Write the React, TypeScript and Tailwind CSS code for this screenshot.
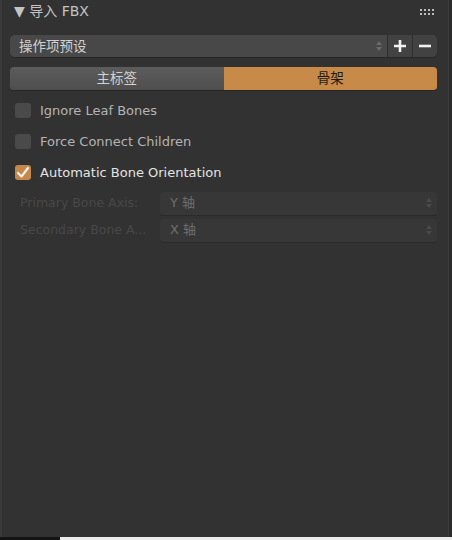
import React from "react";

const font = { fontFamily: '"DejaVu Sans", "Noto Sans CJK SC", sans-serif' };

function Arrows({ color = "#6a6a6a" }: { color?: string }) {
  return (
    <svg width="8" height="14" viewBox="0 0 8 14">
      <path d="M1 6 L4 2 L7 6 Z" fill={color} />
      <path d="M1 8 L4 12 L7 8 Z" fill={color} />
    </svg>
  );
}

function Check({ checked, label, bright }: { checked?: boolean; label: string; bright?: boolean }) {
  return (
    <div className="flex items-center h-[31px] pl-[13px]">
      {checked ? (
        <div className="w-[16px] h-[15px] rounded-[3px] bg-[#c4884a] flex items-center justify-center">
          <svg width="14" height="13" viewBox="0 0 14 13">
            <path d="M2 7 L5.5 10.5 L12 2" stroke="#f4f0ea" strokeWidth="2.2" fill="none" strokeLinecap="round" strokeLinejoin="round" />
          </svg>
        </div>
      ) : (
        <div className="w-[16px] h-[15px] rounded-[3px] bg-[#4a4a4a]" />
      )}
      <span className={`ml-[9px] text-[13px] ${bright ? "text-[#e4e4e4]" : "text-[#b4b4b4]"}`}>{label}</span>
    </div>
  );
}

function AxisRow({ label, value }: { label: string; value: string }) {
  return (
    <div className="flex items-center h-[27px]">
      <div className="w-[158px] pl-[18px] text-[12.5px] text-[#484848] whitespace-nowrap overflow-hidden">{label}</div>
      <div className="flex-1 h-[24px] mr-[11px] rounded-[4px] bg-[#373737] border-b border-[#2a2a2a] flex items-center justify-between pl-[10px] pr-[4px]">
        <span className="text-[13px] text-[#6e6e6e]">{value}</span>
        <Arrows color="#4a4a4a" />
      </div>
    </div>
  );
}

export default function App() {
  return (
    <div className="w-[452px] h-[540px] bg-[#2a2a2a] flex flex-col" style={font}>
      <div className="flex flex-1">
        <div className="w-[449px] bg-[#323232] border-l-2 border-l-[#3a3a3a] border-r border-r-[#3c3c3c] flex flex-col">
          {/* header */}
          <div className="h-[23px] flex items-center justify-between pl-[12px] pr-[14px]">
            <span className="text-[14px] text-[#c4c4c4]">▼ 导入 FBX</span>
            <div className="grid grid-cols-4 gap-[2px]">
              {Array.from({ length: 8 }).map((_, i) => (
                <div key={i} className="w-[2px] h-[2px] bg-[#bdbdbd]" />
              ))}
            </div>
          </div>
          {/* preset */}
          <div className="mt-[12px] ml-[8px] mr-[11px] h-[23px] flex rounded-[5px] bg-[#3d3d3d] border-b border-[#262626]">
            <div className="flex-1 flex items-center justify-between pl-[9px] pr-[4px] rounded-l-[5px] bg-[#484848]">
              <span className="text-[13.5px] text-[#d2d2d2]">操作项预设</span>
              <Arrows />
            </div>
            <div className="w-[25px] flex items-center justify-center border-l border-[#2e2e2e] bg-[#424242]">
              <svg width="16" height="16" viewBox="0 0 16 16">
                <path d="M8 2 V14 M2 8 H14" stroke="#f2f2f2" strokeWidth="2.6" />
              </svg>
            </div>
            <div className="w-[25px] flex items-center justify-center border-l border-[#2e2e2e] bg-[#424242] rounded-r-[5px]">
              <svg width="16" height="16" viewBox="0 0 16 16">
                <path d="M2 8 H14" stroke="#f2f2f2" strokeWidth="2.6" />
              </svg>
            </div>
          </div>
          {/* tabs */}
          <div className="mt-[9px] ml-[8px] mr-[11px] h-[24px] flex rounded-[4px] overflow-hidden border-b border-[#262626]">
            <div className="flex-1 flex items-center justify-center bg-gradient-to-b from-[#5c5c5c] to-[#4e4e4e] text-[13.5px] text-[#d2d2d2]">主标签</div>
            <div className="flex-1 flex items-center justify-center bg-[#c88a48] text-[13.5px] text-[#1c1c1c]">骨架</div>
          </div>
          {/* checkboxes */}
          <div className="mt-[4px] flex flex-col">
            <Check label="Ignore Leaf Bones" />
            <Check label="Force Connect Children" />
            <Check checked bright label="Automatic Bone Orientation" />
          </div>
          <div className="mt-[2px] flex flex-col">
            <AxisRow label="Primary Bone Axis:" value="Y 轴" />
            <AxisRow label="Secondary Bone A..." value="X 轴" />
          </div>
        </div>
      </div>
      <div className="h-[3px] flex">
        <div className="w-[60px] bg-[#141414]" />
        <div className="flex-1 bg-[#ececec]" />
      </div>
    </div>
  );
}
